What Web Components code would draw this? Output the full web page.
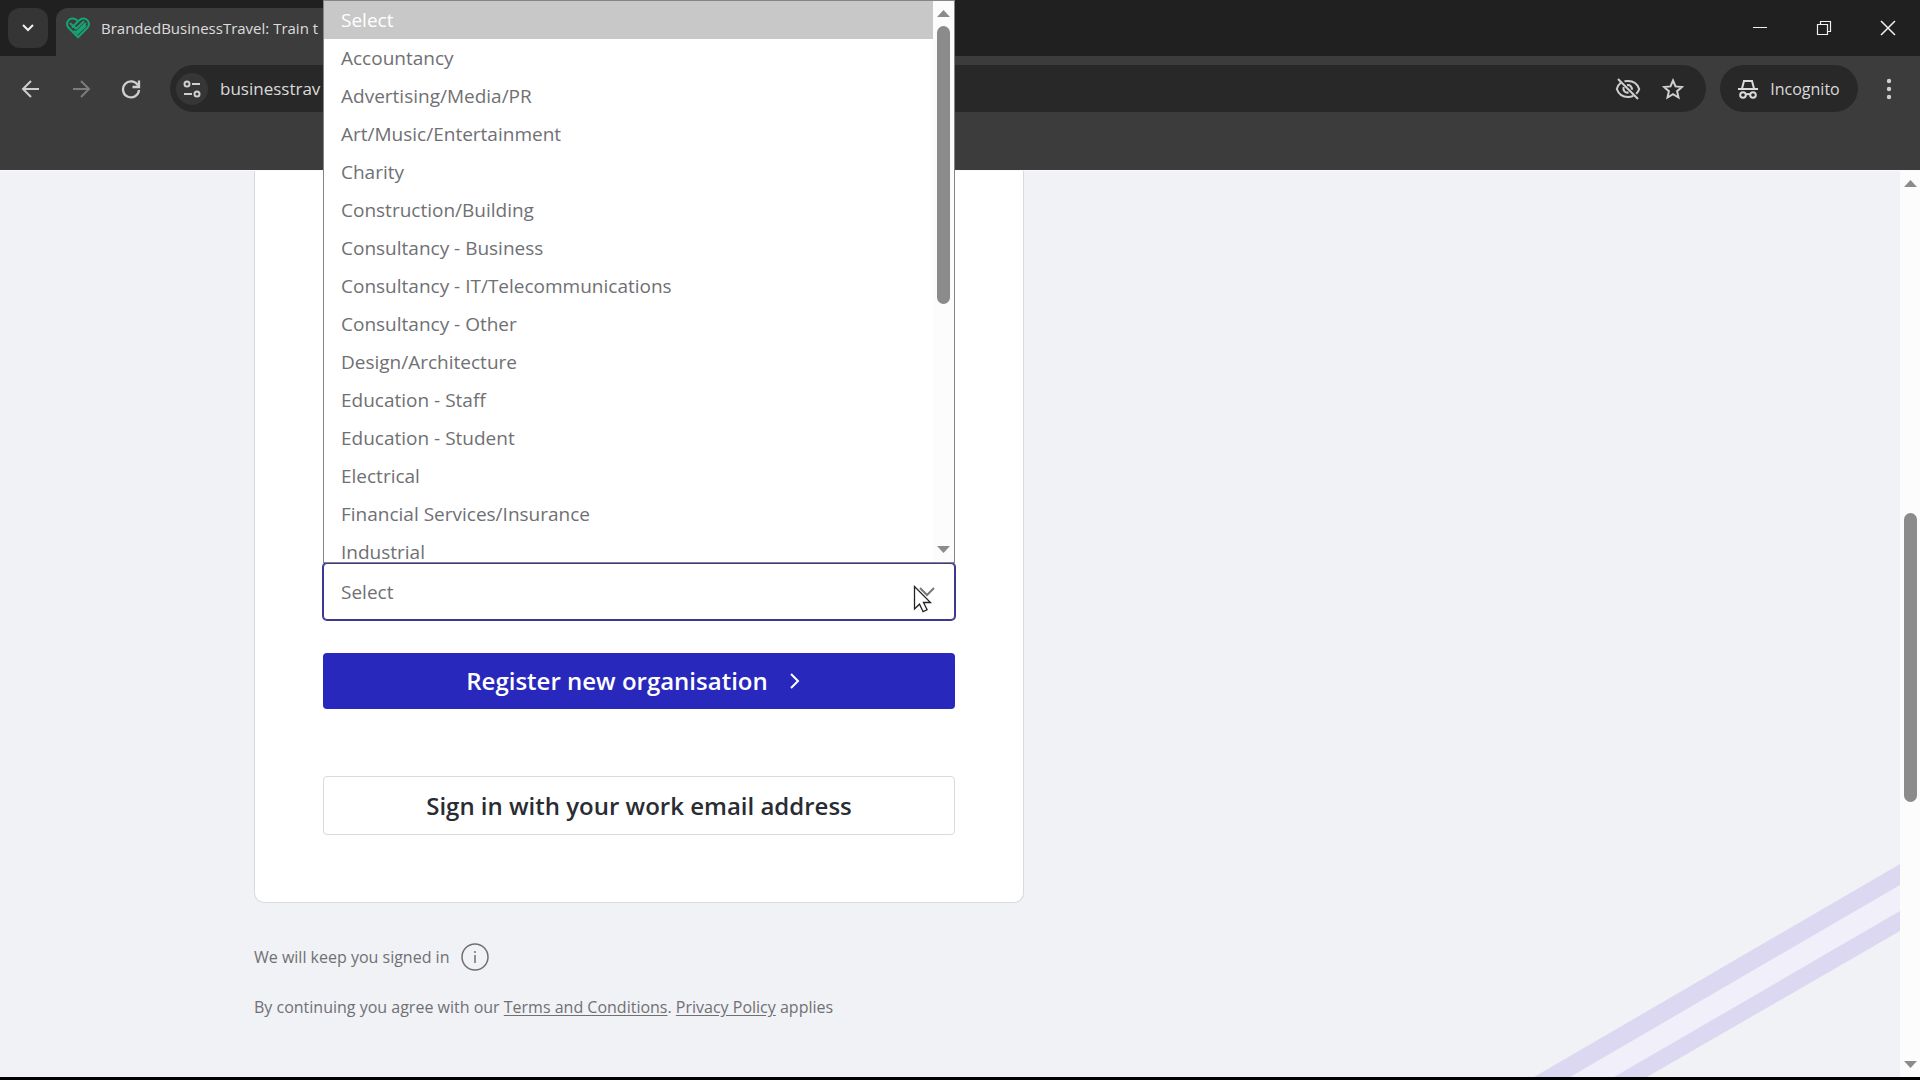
<!DOCTYPE html>
<html lang="en">
<head>
<meta charset="utf-8">
<meta name="viewport" content="width=device-width, initial-scale=1">
<title>BrandedBusinessTravel</title>
<style>
  :root {
    --chrome: #3c3c3c;
    --chrome-dark: #202020;
    --field-dark: #282828;
    --page: #f1f2f6;
    --primary: #2828bd;
    --muted: #6f7074;
    --border: #d9d9de;
  }

  body {
    margin: 0;
    font-family: "Open Sans", "Noto Sans", sans-serif;
    background: #000;
  }
</style>
</head>
<body>
<browser-window>
  <browser-tabs slot="tabs">BrandedBusinessTravel: Train t</browser-tabs>
  <browser-toolbar slot="toolbar">businesstrav</browser-toolbar>
  <register-card>
    <industry-field></industry-field>
  </register-card>
  <legal-note></legal-note>
</browser-window>

<script>
class BrowserWindow extends HTMLElement {
  constructor() {
    super();
    this.attachShadow({ mode: 'open' });
    this.shadowRoot.innerHTML = `
      <style>
        :host {
          display: flex;
          flex-direction: column;
          box-sizing: border-box;
          min-height: 100vh;
          border-bottom: 3px solid #000;
          background: var(--chrome);
        }

        .viewport {
          position: relative;
          flex: 1;
          display: flex;
          border-top: 1px solid #fafafc;
          background: var(--page);
        }

        main {
          flex: 1;
          padding: 0 24px;
        }

        .container {
          display: flex;
          flex-direction: column;
          max-width: 1392px;
          height: 100%;
          margin: 0 auto;
        }

        scroll-rail {
          width: 20px;
          --rows: 320fr 291fr 252fr;
        }

        .stripes {
          position: absolute;
          right: 20px;
          bottom: 0;
        }
      </style>
      <slot name="tabs"></slot>
      <slot name="toolbar"></slot>
      <div class="viewport">
        <svg class="stripes" width="366" height="214" viewBox="0 0 366 214" aria-hidden="true">
          <path d="M36 214 366 22V48L80 214z" fill="#f1effa"/>
          <path d="M0 214 366 1V22L36 214z" fill="#dcd8f2"/>
          <path d="M80 214 366 48V68L113 214z" fill="#dcd8f2"/>
        </svg>
        <main><div class="container"><slot></slot></div></main>
        <scroll-rail></scroll-rail>
      </div>
    `;
  }
}

class BrowserTabs extends HTMLElement {
  constructor() {
    super();
    this.attachShadow({ mode: 'open' });
    this.shadowRoot.innerHTML = `
      <style>
        :host {
          display: flex;
          height: 56px;
          background: var(--chrome-dark);
          color: #dcdcdc;
        }

        button {
          display: grid;
          place-items: center;
          border: 0;
          padding: 0;
          color: #f0f0f0;
          background: none;
        }

        .search {
          width: 40px;
          height: 40px;
          margin: 8px 8px 0;
          border-radius: 12px;
          background: #353535;
        }

        .tab {
          display: flex;
          align-items: center;
          gap: 11px;
          box-sizing: border-box;
          width: 300px;
          height: 48px;
          margin-top: 8px;
          padding: 0 10px 8px;
          border-radius: 12px 12px 0 0;
          background: var(--chrome);
          font-size: 15px;
          white-space: nowrap;
        }

        .controls {
          display: flex;
          margin-left: auto;
        }

        .controls button {
          width: 64px;
        }
      </style>
      <button class="search" aria-label="Search tabs">
        <svg width="14" height="10" viewBox="0 0 14 10" fill="none" stroke="currentColor" stroke-width="2"><path d="m2 2 5 5 5-5"/></svg>
      </button>
      <div class="tab">
        <svg width="24" height="22" viewBox="0 0 24 22" fill="none" stroke="#17a373" stroke-width="2" stroke-linejoin="round" stroke-linecap="round">
          <path d="M12 4.500C9.500 1 5 .5 2.600 3.200.500 5.800.900 9 3 11.200l9 9 9-9c2.200-2.200 2.500-5.400.300-8C19.200.8 15.500 1 13.200 3.300L6.500 10"/>
          <path d="m4.500 6.500 5.500 5.200 7.500-7M7.500 14.500l3 .5 9-8.500M11 17l8.500-8"/>
        </svg>
        <slot></slot>
      </div>
      <div class="controls">
        <button aria-label="Minimise"><svg width="16" height="16" fill="none" stroke="currentColor" stroke-width="1"><path d="M1 7.500h14"/></svg></button>
        <button aria-label="Restore"><svg width="16" height="16" fill="none" stroke="currentColor" stroke-width="1.200"><path d="M1.500 4.500h10v10h-10zM4.500 4V1.500h10v10H12"/></svg></button>
        <button aria-label="Close"><svg width="16" height="16" fill="none" stroke="currentColor" stroke-width="1.500"><path d="m1 1 14 14M15 1 1 15"/></svg></button>
      </div>
    `;
  }
}

class BrowserToolbar extends HTMLElement {
  constructor() {
    super();
    this.attachShadow({ mode: 'open' });
    this.shadowRoot.innerHTML = `
      <style>
        :host {
          display: block;
          padding: 9px 12px 58px 6px;
          background: var(--chrome);
          color: #dadada;
        }

        .row {
          display: flex;
          align-items: center;
          height: 47px;
        }

        button {
          display: grid;
          place-items: center;
          width: 50px;
          height: 47px;
          padding: 0;
          border: 0;
          background: none;
          color: #cfcfcf;
          font: inherit;
        }

        button:disabled {
          color: #7c7c7c;
        }

        .address {
          flex: 1;
          display: flex;
          align-items: center;
          height: 47px;
          margin: 0 14px;
          padding: 0 11px 0 6px;
          border-radius: 24px;
          background: var(--field-dark);
          font-size: 17px;
        }

        .address button {
          width: 45px;
        }

        .address .site {
          width: 32px;
          height: 32px;
          margin-right: 12px;
          border-radius: 50%;
          background: #363636;
        }

        .url {
          flex: 1;
        }

        .incognito {
          display: flex;
          align-items: center;
          justify-content: center;
          gap: 12px;
          width: 138px;
          border-radius: 24px;
          background: var(--field-dark);
          color: #dadada;
          font-size: 16px;
        }

        .menu {
          width: 38px;
          margin-left: 12px;
        }
      </style>
      <div class="row">
        <button aria-label="Back"><svg width="20" height="20" viewBox="0 0 20 20" fill="none" stroke="currentColor" stroke-width="2"><path d="M18 10H3m7-8-8 8 8 8"/></svg></button>
        <button aria-label="Forward" disabled><svg width="20" height="20" viewBox="0 0 20 20" fill="none" stroke="currentColor" stroke-width="2"><path d="M2 10h15m-7-8 8 8-8 8"/></svg></button>
        <button aria-label="Reload"><svg width="20" height="20" viewBox="0 0 20 20" fill="none" stroke="currentColor" stroke-width="2.300"><path d="M17 6.500A8 8 0 1 0 18 11"/><path d="M18 1.500V8h-6.500"/></svg></button>
        <div class="address">
          <button class="site" aria-label="Site information"><svg width="18" height="18" viewBox="0 0 18 18" fill="none" stroke="currentColor" stroke-width="2"><circle cx="4" cy="4" r="2.500"/><circle cx="14" cy="14" r="2.500"/><path d="M9 4h8M1 14h8"/></svg></button>
          <span class="url"><slot></slot></span>
          <button aria-label="Third-party cookies blocked"><svg width="26" height="24" viewBox="0 0 26 24" fill="none" stroke="currentColor" stroke-width="2"><path d="M6 5.500C3.800 7.200 2.500 9.500 1.800 12 3.500 17 8 20 13 20c2 0 3.800-.500 5.300-1.200M9.500 4.300C10.600 4 11.800 4 13 4c5 0 9.500 3 11.200 8-.600 1.900-1.600 3.500-3 4.900"/><path d="M12 8.200c3-.600 5.300 1.800 4.800 4.600M8.600 10c-1 3.500 1.700 6.200 5 5.500M3 2l20 20"/></svg></button>
          <button aria-label="Bookmark this tab"><svg width="22" height="22" viewBox="0 0 22 22" fill="none" stroke="currentColor" stroke-width="2"><path d="m11 2.500 2.500 5.900 6.400.6-4.800 4.200 1.400 6.300-5.500-3.300-5.500 3.300 1.400-6.300L2.100 9l6.400-.6z"/></svg></button>
        </div>
        <button class="incognito"><svg width="20" height="20" viewBox="0 0 20 20" fill="none" stroke="currentColor" stroke-width="2"><path d="M0 10h20M4 9.500 6 2h8l2 7.500"/><circle cx="5" cy="16" r="2.800"/><circle cx="15" cy="16" r="2.800"/><path d="M8 15.500q2-1 4 0"/></svg>Incognito</button>
        <button class="menu" aria-label="Menu"><svg width="6" height="22" fill="currentColor"><circle cx="3" cy="3" r="2.200"/><circle cx="3" cy="11" r="2.200"/><circle cx="3" cy="19" r="2.200"/></svg></button>
      </div>
    `;
  }
}

/* Scrollbar: --rows is the space above the thumb, the thumb, the space below */
class ScrollRail extends HTMLElement {
  constructor() {
    super();
    this.attachShadow({ mode: 'open' });
    this.shadowRoot.innerHTML = `
      <style>
        :host {
          display: flex;
          flex-direction: column;
          align-items: center;
          background: #fcfcfc;
        }

        svg {
          flex: none;
          padding: 9px 0;
        }

        .track {
          flex: 1;
          display: grid;
          grid-template-rows: var(--rows);
        }

        .thumb {
          grid-row: 2;
          width: 13px;
          border-radius: 7px;
          background: #8b8b8b;
        }
      </style>
      <svg width="13" height="7" fill="#8b8b8b"><path d="m0 7 6.500-7L13 7z"/></svg>
      <div class="track"><div class="thumb"></div></div>
      <svg width="13" height="7" fill="#8b8b8b"><path d="m0 0 6.500 7L13 0z"/></svg>
    `;
  }
}

class RegisterCard extends HTMLElement {
  constructor() {
    super();
    this.attachShadow({ mode: 'open' });
    this.shadowRoot.innerHTML = `
      <style>
        :host {
          flex: 1;
          display: flex;
          flex-direction: column;
          justify-content: flex-end;
          box-sizing: border-box;
          max-width: 770px;
          padding: 0 68px 67px;
          border: 1px solid var(--border);
          border-top: 0;
          border-radius: 0 0 10px 10px;
          background: #fff;
        }

        form {
          display: flex;
          flex-direction: column;
        }

        button {
          display: flex;
          align-items: center;
          justify-content: center;
          gap: 14px;
          border-radius: 4px;
          font: 600 24px/32px "Open Sans", "Noto Sans", sans-serif;
        }

        .register {
          height: 56px;
          margin: 33px 0 67px;
          padding: 0 12px 0 6px;
          border: 0;
          background: var(--primary);
          color: #fff;
        }

        .signin {
          height: 59px;
          border: 1px solid var(--border);
          background: #fff;
          color: #2a2c33;
        }
      </style>
      <form>
        <slot></slot>
        <button class="register" type="button">Register new organisation
          <svg width="24" height="24" viewBox="0 0 24 24" fill="none" stroke="currentColor" stroke-width="2"><path d="m9 5 7 7-7 7"/></svg>
        </button>
        <button class="signin" type="button">Sign in with your work email address</button>
      </form>
    `;
  }
}

const industries = [
  'Select',
  'Accountancy',
  'Advertising/Media/PR',
  'Art/Music/Entertainment',
  'Charity',
  'Construction/Building',
  'Consultancy - Business',
  'Consultancy - IT/Telecommunications',
  'Consultancy - Other',
  'Design/Architecture',
  'Education - Staff',
  'Education - Student',
  'Electrical',
  'Financial Services/Insurance',
  'Industrial',
];

class IndustryField extends HTMLElement {
  constructor() {
    super();
    this.attachShadow({ mode: 'open' });
    this.shadowRoot.innerHTML = `
      <style>
        :host {
          display: block;
          position: relative;
          color: var(--muted);
          font-size: 19px;
        }

        select {
          display: block;
          appearance: none;
          width: 100%;
          height: 57px;
          padding: 0 17px;
          border: 1px solid #3b3792;
          border-radius: 4px;
          outline: 0;
          box-shadow: 0 0 0 1px #3b3792;
          background: #fff;
          color: inherit;
          font: inherit;
        }

        .chevron,
        .pointer {
          position: absolute;
          pointer-events: none;
        }

        .chevron {
          right: 20px;
          top: 24px;
        }

        .pointer {
          right: 22px;
          top: 22px;
        }

        .popup {
          position: absolute;
          z-index: 2;
          left: 0;
          right: 0;
          bottom: 100%;
          display: flex;
          box-sizing: border-box;
          height: 563px;
          border: 1px solid #858585;
          background: #fff;
        }

        ul {
          flex: 1;
          margin: 0;
          padding: 0;
          overflow: hidden;
          list-style: none;
        }

        li {
          padding: 0 17px;
          line-height: 38px;
        }

        li[aria-selected="true"] {
          background: #c8c8c8;
          color: #fff;
        }

        scroll-rail {
          width: 21px;
          --rows: 0fr 279fr 233fr;
        }
      </style>
      <select aria-label="Industry">
        ${industries.map((name) => `<option>${name}</option>`).join('')}
      </select>
      <svg class="chevron" width="16" height="10" viewBox="0 0 16 10" fill="none" stroke="#77787c" stroke-width="2"><path d="m1 1 7 7 7-7"/></svg>
      <svg class="pointer" width="20" height="28" viewBox="0 0 20 28" fill="#fff" stroke="#222" stroke-width="1.300"><path d="M1.500 1.500v22.500l5-4.800 3.600 7.500 4-1.900-3.600-7.300h7z"/></svg>
      <div class="popup">
        <ul role="listbox" aria-label="Industry">
          ${industries.map((name, i) => `<li role="option" aria-selected="${i === 0}">${name}</li>`).join('')}
        </ul>
        <scroll-rail></scroll-rail>
      </div>
    `;
  }
}

class LegalNote extends HTMLElement {
  constructor() {
    super();
    this.attachShadow({ mode: 'open' });
    this.shadowRoot.innerHTML = `
      <style>
        :host {
          display: block;
          padding: 40px 0 58px;
          color: var(--muted);
          font-size: 16px;
          line-height: 24px;
        }

        p {
          margin: 0;
        }

        .signed {
          display: flex;
          align-items: center;
          gap: 12px;
          margin-bottom: 24px;
        }

        button {
          display: flex;
          padding: 0;
          border: 0;
          background: none;
          color: inherit;
        }

        a {
          color: inherit;
          text-underline-offset: 2px;
        }
      </style>
      <p class="signed">We will keep you signed in
        <button aria-label="More information"><svg width="28" height="28" viewBox="0 0 28 28" fill="none" stroke="currentColor" stroke-width="1.500"><circle cx="14" cy="14" r="13"/><path d="M14 12v8M14 8v2"/></svg></button>
      </p>
      <p>By continuing you agree with our <a href="#terms">Terms and Conditions</a>. <a href="#privacy">Privacy Policy</a> applies</p>
    `;
  }
}

customElements.define('scroll-rail', ScrollRail);
customElements.define('browser-window', BrowserWindow);
customElements.define('browser-tabs', BrowserTabs);
customElements.define('browser-toolbar', BrowserToolbar);
customElements.define('register-card', RegisterCard);
customElements.define('industry-field', IndustryField);
customElements.define('legal-note', LegalNote);
</script>
</body>
</html>
